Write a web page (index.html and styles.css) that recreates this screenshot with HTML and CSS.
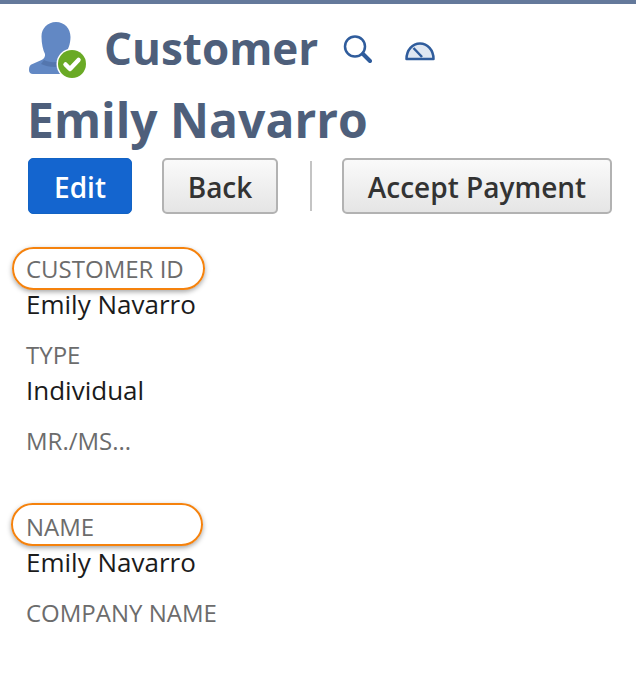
FILE: index.html
```html
<!DOCTYPE html>
<html lang="en">
<head>
  <meta charset="UTF-8">
  <title>Customer | Emily Navarro</title>
  <meta name="viewport" content="width=device-width, initial-scale=1.0">
  <link rel="stylesheet" href="styles.css">
</head>
<body>
  <div class="topbar"></div>

  <header class="page-title">
    <svg class="icon-customer" width="58" height="58" viewBox="0 0 58 58">
      <path fill="#6288c4" d="M27 0c8.500 0 14.500 6.500 14.500 15 0 7-2.500 13-5.500 17-1 2-.5 5 1.500 6.500l6 3.500v10H4c-2.500 0-4-1.500-4-4 0-3.500 1-5 3.500-6l9-4c2.500-1 4-3.500 3.500-6-2-4-3.500-10-3.500-17.500C12.500 6.500 18.500 0 27 0z"/>
      <path fill="#5476ae" d="M15 38c6 3 14 3 22-1l3 4c-8 5-19 5-28 1z"/>
      <circle cx="43" cy="42" r="15.500" fill="#fff"/>
      <circle cx="43" cy="42" r="14" fill="#6aaa25"/>
      <path fill="none" stroke="#fff" stroke-width="4.500" stroke-linecap="round" stroke-linejoin="round" d="M36.500 42.500l4.500 4.500 8.500-9"/>
    </svg>
    <h2>Customer</h2>
    <svg class="icon-search" width="30" height="30" viewBox="0 0 30 30">
      <circle cx="13" cy="11.500" r="10" fill="none" stroke="#2f5c9c" stroke-width="2.500"/>
      <path stroke="#2f5c9c" stroke-width="4" stroke-linecap="round" d="M21 19l7 7"/>
    </svg>
    <svg class="icon-gauge" width="30" height="20" viewBox="0 0 30 20">
      <path fill="#dfe7f2" stroke="#2f5c9c" stroke-width="2.500" stroke-linejoin="round" d="M1.500 18c0-9 6-15.500 13.500-15.500S28.500 9 28.500 18z"/>
      <path stroke="#2f5c9c" stroke-width="2.500" d="M8.500 7l8.500 9"/>
    </svg>
  </header>

  <h1>Emily Navarro</h1>

  <div class="buttons">
    <button class="btn btn-primary btn-edit">Edit</button>
    <button class="btn btn-back">Back</button>
    <span class="divider"></span>
    <button class="btn btn-accept">Accept Payment</button>
  </div>

  <div class="fields">
    <div class="field">
      <div class="label">CUSTOMER ID<span class="oval oval-id"></span></div>
      <div class="value">Emily Navarro</div>
    </div>
    <div class="field">
      <div class="label">TYPE</div>
      <div class="value">Individual</div>
    </div>
    <div class="field field-empty">
      <div class="label">MR./MS...</div>
    </div>
    <div class="field">
      <div class="label">NAME<span class="oval oval-name"></span></div>
      <div class="value">Emily Navarro</div>
    </div>
    <div class="field">
      <div class="label">COMPANY NAME</div>
    </div>
  </div>
</body>
</html>
```

FILE: styles.css
```css
body {
  margin: 0;
  background: white;
  font-family: 'Open Sans', sans-serif;
}

.topbar {
  height: 4px;
  background: #64799b;
}

.page-title {
  display: flex;
  align-items: center;
  height: 58px;
  margin-top: 18px;
  padding-left: 29px;
}

.page-title h2 {
  margin: -6px 0 0 17px;
  font-size: 44px;
  line-height: 54px;
  font-weight: 700;
  color: #4e5f7b;
}

.icon-search { margin: -2px 0 0 24px; }
.icon-gauge { margin-left: 33px; }

h1 {
  margin: 9px 0 0 27px;
  font-size: 48px;
  line-height: 62px;
  font-weight: 700;
  color: #4e5f7b;
}

.buttons {
  display: flex;
  align-items: center;
  margin: 7px 0 0 28px;
}

.btn {
  height: 56px;
  padding: 2px 0 0;
  border: 2px solid #b2b2b2;
  border-radius: 5px;
  background: linear-gradient(#fafafa, #e5e5e5);
  font-family: inherit;
  font-size: 28px;
  font-weight: 600;
  color: #333;
}

.btn-primary {
  border: 1px solid #1263c4;
  background: #1465cf;
  color: white;
}

.btn-edit { width: 104px; }
.btn-back { width: 116px; margin-left: 30px; }
.btn-accept { width: 270px; }

.divider {
  width: 2px;
  height: 50px;
  margin: 0 30px 0 32px;
  background: #c4c4c4;
}

.fields {
  margin: 38px 0 0 26px;
}

.field {
  margin-bottom: 16px;
}

.field-empty {
  margin-bottom: 53px;
}

.label {
  position: relative;
  font-size: 24px;
  line-height: 33px;
  color: #6c6c6c;
}

.value {
  margin-top: 2px;
  font-size: 26px;
  line-height: 35px;
  color: #1b1b1b;
}

/* orange callouts drawn on top of the screenshot */
.oval {
  position: absolute;
  left: -14px;
  top: -5px;
  height: 39px;
  border: 2px solid #f5820d;
  border-radius: 22px;
  box-shadow: 0 2px 5px rgba(0, 0, 0, 0.35);
}

.oval-id { width: 189px; }
.oval-name { width: 188px; left: -15px; top: -7px; }
```
